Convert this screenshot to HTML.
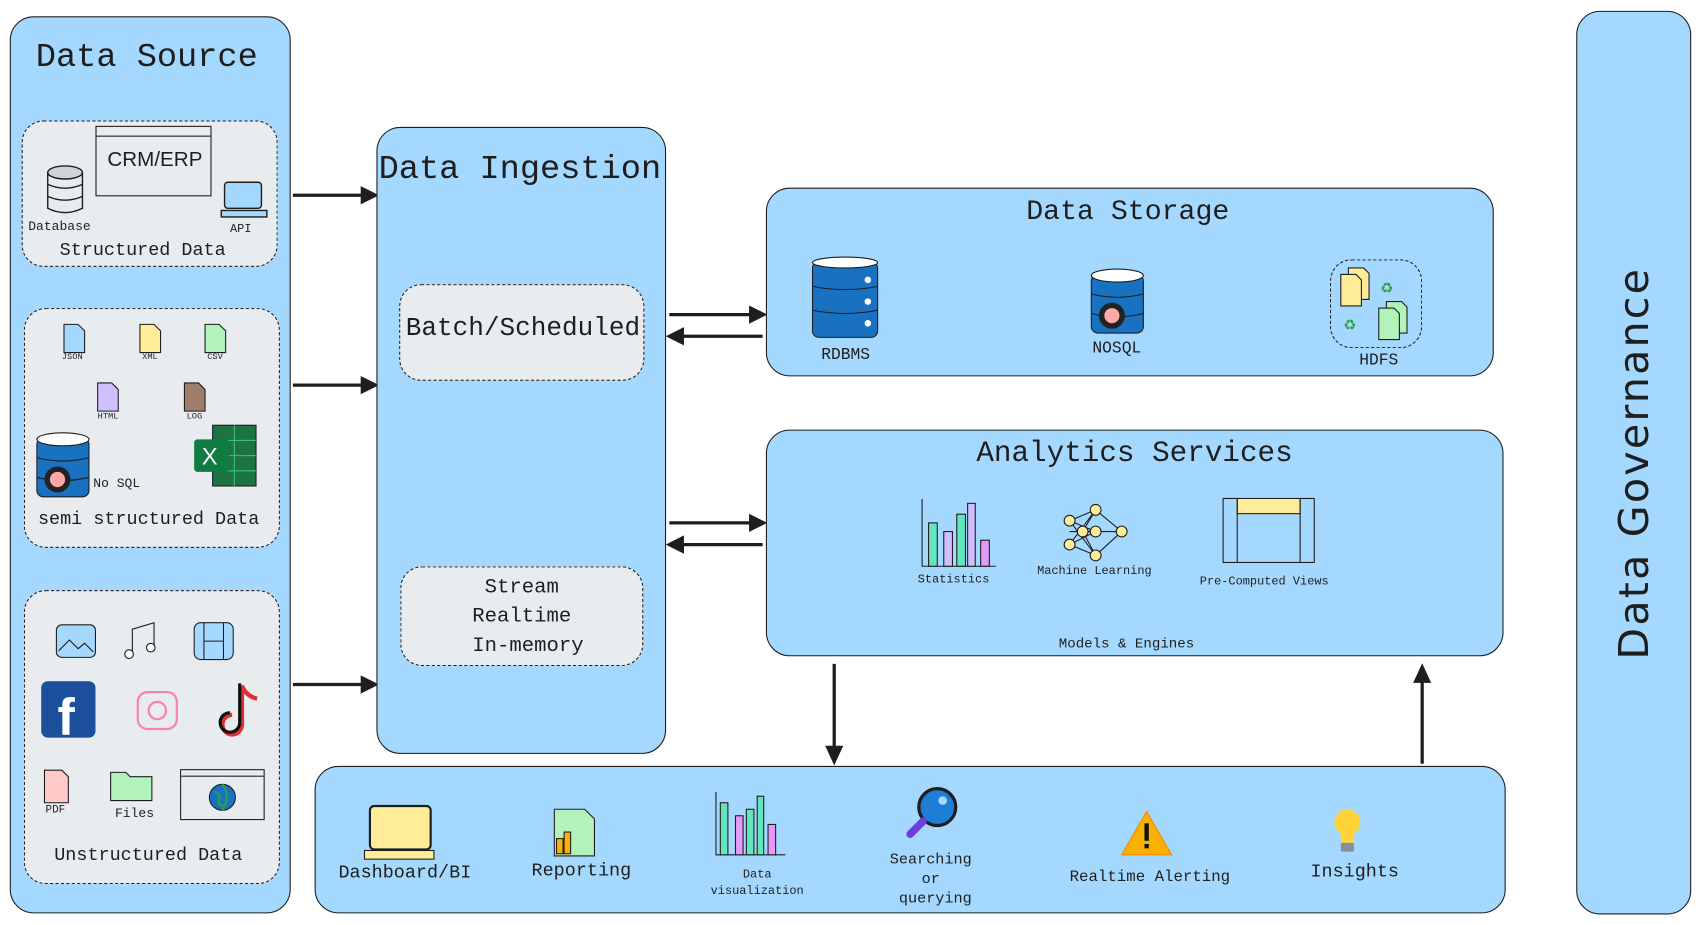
<!DOCTYPE html>
<html><head><meta charset="utf-8"><style>
html,body{margin:0;padding:0;background:#fff;width:1701px;height:925px;overflow:hidden}
#w{position:absolute;left:0;top:0;width:1568px;height:853px;transform:scale(1.0848);transform-origin:0 0;font-family:"Liberation Mono","DejaVu Sans Mono",monospace;color:#1e1e1e}
.b{position:absolute;background:#a5d8ff;border:1.6px solid #1e1e1e;border-radius:22px;box-sizing:border-box}
.d{position:absolute;background:#e9ecef;border:1.6px dashed #1e1e1e;border-radius:20px;box-sizing:border-box}
.t{position:absolute;white-space:nowrap}
.c{text-align:center}
svg{position:absolute;overflow:visible}
</style></head><body><div id="w">

<div class="b" style="left:9px;top:15px;width:259px;height:827px"></div>
<div class="t" style="left:33px;top:36px;font-size:31px">Data Source</div>
<div class="d" style="left:20px;top:111px;width:236px;height:135px"></div>
<div class="d" style="left:22px;top:284px;width:236px;height:221px"></div>
<div class="d" style="left:22px;top:544px;width:236px;height:271px"></div>
<div style="position:absolute;left:88px;top:116px;width:107px;height:65px;border:1.5px solid #1e1e1e;background:#e9ecef;box-sizing:border-box"><div style="height:8px;border-bottom:1.5px solid #1e1e1e"></div></div>
<div class="t" style="left:99px;top:137px;font-size:19px;font-family:'Liberation Sans',sans-serif">CRM/ERP</div>
<svg style="left:42px;top:152px" width="36" height="48"><ellipse cx="18" cy="7" rx="16" ry="6" fill="#ced4da" stroke="#1e1e1e" stroke-width="1.3"/><path d="M2 7V40Q18 48 34 40V7M2 18Q18 25 34 18M2 29Q18 36 34 29" fill="none" stroke="#1e1e1e" stroke-width="1.3"/></svg>
<div class="t" style="left:26px;top:202px;font-size:12px">Database</div>
<svg style="left:204px;top:167px" width="42" height="36"><rect x="3" y="1" width="34" height="24" rx="3" fill="#a5d8ff" stroke="#1e1e1e" stroke-width="1.3"/><rect x="0" y="27" width="42" height="6" fill="#a5d8ff" stroke="#1e1e1e" stroke-width="1.3"/></svg>
<div class="t" style="left:212px;top:206px;font-size:11px">API</div>
<div class="t" style="left:55px;top:222px;font-size:17px">Structured Data</div>

<svg style="left:58px;top:298px" width="170" height="80">
<path d="M1 1h13l6 6v20H1z" fill="#a5d8ff" stroke="#1e1e1e"/>
<path d="M71 1h13l6 6v20H71z" fill="#ffec99" stroke="#1e1e1e"/>
<path d="M131 1h13l6 6v20H131z" fill="#b2f2bb" stroke="#1e1e1e"/>
<path d="M32 55h13l6 6v20H32z" fill="#d0bfff" stroke="#1e1e1e"/>
<path d="M112 55h13l6 6v20H112z" fill="#a07c6a" stroke="#1e1e1e"/>
</svg>
<div class="t" style="left:57px;top:325px;font-size:8px">JSON</div>
<div class="t" style="left:131px;top:325px;font-size:8px">XML</div>
<div class="t" style="left:191px;top:325px;font-size:8px">CSV</div>
<div class="t" style="left:90px;top:380px;font-size:8px">HTML</div>
<div class="t" style="left:172px;top:380px;font-size:8px">LOG</div>
<svg style="left:33px;top:398px" width="50" height="62"><rect x="1" y="6" width="48" height="54" rx="6" fill="#1971c2" stroke="#1e1e1e"/><ellipse cx="25" cy="7" rx="24" ry="6" fill="#fff" stroke="#1e1e1e"/><path d="M1 24Q25 30 49 24M1 42Q25 48 49 42" stroke="#1e1e1e" fill="none"/><circle cx="20" cy="44" r="12" fill="#222"/><circle cx="20" cy="44" r="7" fill="#ffa8a8"/></svg>
<div class="t" style="left:86px;top:439px;font-size:12px">No SQL</div>
<svg style="left:178px;top:391px" width="60" height="58"><rect x="18" y="1" width="40" height="56" fill="#1d7344" stroke="#1e1e1e"/><path d="M38 1v56M18 15h40M18 29h40M18 43h40" stroke="#33c481"/><rect x="1" y="14" width="32" height="30" rx="3" fill="#107c41"/><text x="8" y="37" fill="#fff" font-size="22" font-family="Liberation Sans">X</text></svg>
<div class="t" style="left:35px;top:470px;font-size:17px">semi structured Data</div>

<svg style="left:50px;top:572px" width="180" height="40">
<rect x="2" y="4" width="36" height="30" rx="5" fill="#a5d8ff" stroke="#1e1e1e"/><path d="M4 28l10-10 8 8 6-5 8 8" fill="none" stroke="#1e1e1e"/>
<path d="M72 30V8l20-6v22" fill="none" stroke="#1e1e1e"/><circle cx="69" cy="31" r="4" fill="#fff" stroke="#1e1e1e"/><circle cx="89" cy="25" r="4" fill="#fff" stroke="#1e1e1e"/>
<rect x="129" y="2" width="36" height="34" rx="6" fill="#a5d8ff" stroke="#1e1e1e"/><path d="M138 2v34M156 2v34M138 19h18" stroke="#1e1e1e"/>
</svg>
<svg style="left:37px;top:627px" width="210" height="56">
<rect x="1" y="1" width="50" height="52" rx="6" fill="#1c4f9c"/><text x="16" y="50" fill="#fff" font-size="48" font-family="Liberation Sans" font-weight="bold">f</text>
<rect x="90" y="11" width="36" height="34" rx="9" fill="none" stroke="#f783ac" stroke-width="2"/><circle cx="108" cy="28" r="8" fill="none" stroke="#f783ac" stroke-width="2"/>
<path d="M186 5v36a9 9 0 1 1-9-9M186 5q4 10 14 12" fill="none" stroke="#e03131" stroke-width="4"/><path d="M184 3v36a9 9 0 1 1-9-9" fill="none" stroke="#111" stroke-width="3"/>
</svg>
<svg style="left:40px;top:708px" width="110" height="34"><path d="M1 2h16l6 6v24H1z" fill="#ffc9c9" stroke="#1e1e1e"/><path d="M62 4h14l4 4h20v22H62z" fill="#b2f2bb" stroke="#1e1e1e"/></svg>
<div class="t" style="left:42px;top:742px;font-size:10px">PDF</div>
<div class="t" style="left:106px;top:743px;font-size:12px">Files</div>
<div style="position:absolute;left:166px;top:709px;width:78px;height:47px;border:1.5px solid #1e1e1e;background:#e9ecef;box-sizing:border-box"><div style="height:5px;border-bottom:1.5px solid #1e1e1e"></div></div>
<svg style="left:192px;top:722px" width="26" height="26"><circle cx="13" cy="13" r="12" fill="#1971c2" stroke="#1e1e1e"/><path d="M6 8q6 2 4 8t6 4M13 1q8 10 0 24" stroke="#2f9e44" stroke-width="2" fill="none"/></svg>
<div class="t" style="left:50px;top:780px;font-size:17px">Unstructured Data</div>

<svg style="left:268px;top:170px" width="80" height="470"><g stroke="#1e1e1e" stroke-width="3" fill="#1e1e1e">
<path d="M2 10H70"/><path d="M78 10l-12-6v12z"/>
<path d="M2 185H70"/><path d="M78 185l-12-6v12z"/>
<path d="M2 461H70"/><path d="M78 461l-12-6v12z"/></g></svg>

<div class="b" style="left:347px;top:117px;width:267px;height:578px"></div>
<div class="t" style="left:349px;top:139px;font-size:31px">Data Ingestion</div>
<div class="d" style="left:368px;top:262px;width:226px;height:89px"></div>
<div class="t" style="left:374px;top:290px;font-size:24px">Batch/Scheduled</div>
<div class="d" style="left:369px;top:522px;width:224px;height:92px"></div>
<div class="t c" style="left:369px;top:528px;width:224px;font-size:19px;line-height:27px">Stream<br>Realtime<br>&nbsp;In-memory</div>

<svg style="left:614px;top:280px" width="92" height="235"><g stroke="#1e1e1e" stroke-width="3" fill="#1e1e1e">
<path d="M3 10H82"/><path d="M90 10l-12-6v12z"/>
<path d="M12 30H89"/><path d="M3 30l12-6v12z"/>
<path d="M3 202H82"/><path d="M90 202l-12-6v12z"/>
<path d="M12 222H89"/><path d="M3 222l12-6v12z"/></g></svg>

<div class="b" style="left:706px;top:173px;width:671px;height:174px"></div>
<div class="t" style="left:946px;top:180px;font-size:26px">Data Storage</div>
<svg style="left:748px;top:236px" width="62" height="76"><rect x="1" y="5" width="60" height="70" rx="6" fill="#1971c2" stroke="#1e1e1e"/><ellipse cx="31" cy="6" rx="30" ry="5" fill="#fff" stroke="#1e1e1e"/><path d="M1 28Q31 34 61 28M1 50Q31 56 61 50" stroke="#1e1e1e" fill="none"/><circle cx="52" cy="22" r="3" fill="#fff"/><circle cx="52" cy="42" r="3" fill="#fff"/><circle cx="52" cy="62" r="3" fill="#fff"/></svg>
<div class="t" style="left:757px;top:319px;font-size:15px">RDBMS</div>
<svg style="left:1005px;top:247px" width="50" height="62"><rect x="1" y="6" width="48" height="54" rx="6" fill="#1971c2" stroke="#1e1e1e"/><ellipse cx="25" cy="7" rx="24" ry="6" fill="#fff" stroke="#1e1e1e"/><path d="M1 24Q25 30 49 24M1 42Q25 48 49 42" stroke="#1e1e1e" fill="none"/><circle cx="20" cy="44" r="12" fill="#222"/><circle cx="20" cy="44" r="7" fill="#ffa8a8"/></svg>
<div class="t" style="left:1007px;top:313px;font-size:15px">NOSQL</div>
<div class="d" style="left:1226px;top:239px;width:85px;height:82px;background:transparent"></div>
<svg style="left:1235px;top:246px" width="70" height="70"><path d="M8 1h14l5 5v24H8z" fill="#ffec99" stroke="#1e1e1e"/><path d="M1 7h14l5 5v24H1z" fill="#ffec99" stroke="#1e1e1e"/><path d="M43 32h14l5 5v24H43z" fill="#b2f2bb" stroke="#1e1e1e"/><path d="M36 38h14l5 5v24H36z" fill="#b2f2bb" stroke="#1e1e1e"/><text x="38" y="24" fill="#2f9e44" font-size="18">♻</text><text x="4" y="58" fill="#2f9e44" font-size="18">♻</text></svg>
<div class="t" style="left:1253px;top:324px;font-size:15px">HDFS</div>

<div class="b" style="left:706px;top:396px;width:680px;height:209px"></div>
<div class="t" style="left:900px;top:404px;font-size:27px">Analytics Services</div>
<svg style="left:848px;top:460px" width="72" height="64"><path d="M2 0v62h68" stroke="#1e1e1e" fill="none"/><rect x="8" y="22" width="8" height="40" fill="#63e6be" stroke="#1e1e1e"/><rect x="22" y="30" width="8" height="32" fill="#d0bfff" stroke="#1e1e1e"/><rect x="34" y="14" width="8" height="48" fill="#63e6be" stroke="#1e1e1e"/><rect x="44" y="4" width="7" height="58" fill="#d0bfff" stroke="#1e1e1e"/><rect x="56" y="38" width="8" height="24" fill="#e599f7" stroke="#1e1e1e"/></svg>
<div class="t" style="left:846px;top:529px;font-size:11px">Statistics</div>
<svg style="left:978px;top:466px" width="64" height="50"><g stroke="#1e1e1e" fill="none"><path d="M8 14L32 4M8 14L32 24M8 14L32 46M8 36L32 4M8 36L32 24M8 36L32 46M8 24L32 24M32 4L56 24M32 24L56 24M32 46L56 24M32 4L20 24M32 46L20 24"/></g><g fill="#ffec99" stroke="#1e1e1e"><circle cx="8" cy="14" r="5"/><circle cx="8" cy="36" r="5"/><circle cx="20" cy="24" r="5"/><circle cx="32" cy="4" r="5"/><circle cx="32" cy="24" r="5"/><circle cx="32" cy="46" r="5"/><circle cx="56" cy="24" r="5"/></g></svg>
<div class="t" style="left:956px;top:521px;font-size:11px">Machine Learning</div>
<div style="position:absolute;left:1127px;top:459px;width:85px;height:60px;border:1.5px solid #1e1e1e;box-sizing:border-box"><div style="margin:0 12px;height:13px;background:#ffec99;border:1.5px solid #1e1e1e;border-top:none"></div><div style="position:absolute;left:12px;top:0;bottom:0;border-left:1.5px solid #1e1e1e"></div><div style="position:absolute;right:12px;top:0;bottom:0;border-left:1.5px solid #1e1e1e"></div></div>
<div class="t" style="left:1106px;top:531px;font-size:11px">Pre-Computed Views</div>
<div class="t" style="left:976px;top:586px;font-size:13px">Models &amp; Engines</div>

<svg style="left:760px;top:610px" width="560" height="96"><g stroke="#1e1e1e" stroke-width="3" fill="#1e1e1e"><path d="M9 2V82"/><path d="M9 92l-6-13h12z"/><path d="M551 94V16"/><path d="M551 5l-6 13h12z"/></g></svg>

<div class="b" style="left:290px;top:706px;width:1098px;height:136px"></div>
<svg style="left:335px;top:742px" width="68" height="52"><rect x="6" y="1" width="56" height="40" rx="4" fill="#ffec99" stroke="#1e1e1e" stroke-width="2"/><rect x="1" y="42" width="64" height="8" fill="#ffec99" stroke="#1e1e1e"/></svg>
<div class="t" style="left:312px;top:796px;font-size:17px">Dashboard/BI</div>
<svg style="left:510px;top:745px" width="40" height="46"><path d="M1 1h28l9 9v34H1z" fill="#b2f2bb" stroke="#1e1e1e"/><rect x="3" y="28" width="6" height="14" fill="#fab005" stroke="#1e1e1e"/><rect x="10" y="22" width="6" height="20" fill="#fab005" stroke="#1e1e1e"/></svg>
<div class="t" style="left:490px;top:794px;font-size:17px">Reporting</div>
<svg style="left:658px;top:730px" width="68" height="60"><path d="M2 0v58h64" stroke="#1e1e1e" fill="none"/><rect x="6" y="10" width="7" height="48" fill="#63e6be" stroke="#1e1e1e"/><rect x="20" y="22" width="7" height="36" fill="#e599f7" stroke="#1e1e1e"/><rect x="30" y="16" width="7" height="42" fill="#63e6be" stroke="#1e1e1e"/><rect x="40" y="4" width="6" height="54" fill="#63e6be" stroke="#1e1e1e"/><rect x="50" y="30" width="7" height="28" fill="#e599f7" stroke="#1e1e1e"/></svg>
<div class="t c" style="left:648px;top:800px;width:100px;font-size:11px;line-height:15px">Data<br>visualization</div>
<svg style="left:834px;top:724px" width="54" height="50"><circle cx="30" cy="20" r="17" fill="#1c7ed6" stroke="#1e1e1e" stroke-width="3"/><path d="M17 33L5 45" stroke="#6741d9" stroke-width="7" stroke-linecap="round"/><circle cx="35" cy="14" r="4" fill="#a5d8ff"/></svg>
<div class="t c" style="left:808px;top:784px;width:100px;font-size:14px;line-height:18px">Searching<br>or<br>&nbsp;querying</div>
<svg style="left:1033px;top:747px" width="48" height="42"><path d="M24 1L47 41H1z" fill="#fab005" stroke="#f08c00"/><rect x="22" y="12" width="4" height="16" fill="#111"/><rect x="22" y="31" width="4" height="4" fill="#111"/></svg>
<div class="t" style="left:986px;top:801px;font-size:14.5px">Realtime Alerting</div>
<svg style="left:1228px;top:745px" width="28" height="44"><circle cx="14" cy="13" r="12" fill="#ffd43b"/><path d="M8 22h12v10H8z" fill="#ffd43b"/><rect x="8" y="32" width="12" height="8" fill="#868e96"/></svg>
<div class="t" style="left:1208px;top:795px;font-size:17px">Insights</div>

<div class="b" style="left:1453px;top:10px;width:106px;height:833px"></div>
<div class="t" style="left:1506px;top:427px;font-size:38px;transform:translate(-50%,-50%) rotate(-90deg);font-family:'DejaVu Sans',sans-serif;letter-spacing:2px">Data Governance</div>

</div></body></html>
